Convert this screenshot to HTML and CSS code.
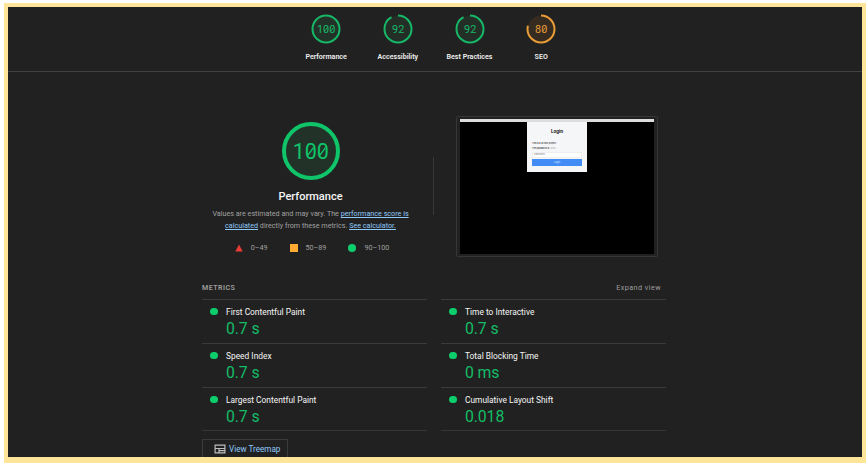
FILE: index.html
```html
<!DOCTYPE html>
<html lang="en">
<head>
<meta charset="utf-8">
<title>Lighthouse report</title>
<link rel="stylesheet" href="styles.css">
</head>
<body>
<main class="report">
  <header class="scores">
    <div class="score">
      <svg class="gauge" viewBox="0 0 30 30"><circle class="ring" cx="15" cy="15" r="13.5"/><text x="6 12.1 18.2" y="18.9">100</text><path class="slash" d="M13.9 17 16.3 13.4M20 17l2.4-3.6"/></svg>
      <span>Performance</span>
    </div>
    <div class="score">
      <svg class="gauge" viewBox="0 0 30 30"><circle class="disc" cx="15" cy="15" r="13.5"/><circle class="ring" cx="15" cy="15" r="13.5" pathLength="100" stroke-dasharray="92 8" transform="rotate(-90 15 15)"/><text x="9 15.2" y="18.9">92</text></svg>
      <span>Accessibility</span>
    </div>
    <div class="score">
      <svg class="gauge" viewBox="0 0 30 30"><circle class="disc" cx="15" cy="15" r="13.5"/><circle class="ring" cx="15" cy="15" r="13.5" pathLength="100" stroke-dasharray="92 8" transform="rotate(-90 15 15)"/><text x="9 15.2" y="18.9">92</text></svg>
      <span>Best Practices</span>
    </div>
    <div class="score average">
      <svg class="gauge" viewBox="0 0 30 30"><circle class="disc" cx="15" cy="15" r="13.5"/><circle class="ring" cx="15" cy="15" r="13.5" pathLength="100" stroke-dasharray="79 21" transform="rotate(-90 15 15)"/><text x="9 15.2" y="18.9">80</text><path class="slash" d="M17 17l2.4-3.6"/></svg>
      <span>SEO</span>
    </div>
  </header>

  <section class="overview">
    <div class="summary">
      <svg class="gauge big" viewBox="0 0 58 58"><circle class="ring" cx="29" cy="29" r="27"/><text x="10.8 22.8 34.8" y="37">100</text><path class="slash" d="M26 33.2 31.4 25.6M38 33.2l5.4-7.6"/></svg>
      <h1>Performance</h1>
      <p>Values are estimated and may vary. The <a>performance score is</a><br><a>calculated</a> directly from these metrics. <a>See calculator.</a></p>
      <div class="legend">
        <span><svg viewBox="0 0 8 8"><path fill="#eb3b36" d="M4 .5 7.7 7.5H.3z"/></svg>0–49</span>
        <span><svg viewBox="0 0 8 8"><path fill="#fa3" d="M0 0h8v8H0z"/></svg>50–89</span>
        <span><svg viewBox="0 0 8 8"><circle fill="#0cce6b" cx="4" cy="4" r="4"/></svg>90–100</span>
      </div>
    </div>
    <div class="divider"></div>
    <div class="preview">
      <div class="page">
        <div class="login">
          <h2>Login</h2>
          <p>This is a school project.</p>
          <p>The password is: <i>1234</i></p>
          <div class="field">Password</div>
          <div class="submit">Login</div>
        </div>
      </div>
    </div>
  </section>

  <section class="metrics">
    <div class="metrics-head"><h3>METRICS</h3><span>Expand view</span></div>
    <div class="metrics-grid">
      <div class="metric"><b>First Contentful Paint</b><strong>0.7 s</strong></div>
      <div class="metric"><b>Time to Interactive</b><strong>0.7 s</strong></div>
      <div class="metric"><b>Speed Index</b><strong>0.7 s</strong></div>
      <div class="metric"><b>Total Blocking Time</b><strong>0 ms</strong></div>
      <div class="metric"><b>Largest Contentful Paint</b><strong>0.7 s</strong></div>
      <div class="metric"><b>Cumulative Layout Shift</b><strong>0.018</strong></div>
    </div>
    <div class="treemap">
      <svg viewBox="0 0 12 10"><path fill="none" stroke="#bdbdbd" stroke-width="1.2" d="M1.1 1.1h9.8v7.8H1.1zM1 4.5h10M5 4.5v4.4M5 6.7h6"/></svg>
      <span>View Treemap</span>
    </div>
  </section>
</main>
</body>
</html>
```
FILE: styles.css
```css
* { box-sizing: border-box; }

body {
  margin: 0;
  height: 464px;
  overflow: hidden;
  padding: 3px 2px 1px 4px;
  background: #fff;
  font-family: Roboto, sans-serif;
  color: #f5f5f5;
}

.report {
  height: 460px;
  border: 4px solid #ffe599;
  border-bottom-width: 6px;
  background: #212121;
  overflow: hidden;
}

h1, h2, h3, p { margin: 0; }

.scores {
  height: 65px;
  padding: 7px 0 0 282.3px;
  display: flex;
  border-bottom: 1px solid #424242;
}

.score {
  width: 71.7px;
  display: flex;
  flex-direction: column;
  align-items: center;
  font-size: 7.1px;
  font-weight: 600;
  line-height: 10px;
  color: #f0f0f0;
  white-space: nowrap;
}
.score span { margin-top: 7.6px; }

.gauge { width: 30px; height: 30px; color: #18b767; }
.average .gauge { color: #e99d37; }
.gauge .ring { fill: none; stroke: currentColor; stroke-width: 2; }
.gauge .ring:first-child { fill: #233228; }
.gauge .disc { fill: #232e27; }
.average .disc { fill: #352b20; }
.gauge text {
  font: 400 10.8px Roboto, sans-serif;
  fill: currentColor;
}
.slash { fill: none; stroke: currentColor; stroke-width: .8; }
.gauge.big { width: 58px; height: 58px; color: #0fc469; }
.gauge.big .ring { stroke-width: 4; }
.gauge.big text { font-size: 21.5px; }
.gauge.big .slash { stroke-width: 1.4; }

.overview {
  height: 205px;
  padding: 44px 0 0 194px;
  display: flex;
}

.summary {
  width: 217px;
  padding-top: 6px;
  display: flex;
  flex-direction: column;
  align-items: center;
}
.summary h1 {
  margin-top: 8px;
  font-size: 11px;
  font-weight: 500;
  line-height: 18px;
}
.summary p {
  margin-top: 2px;
  font-size: 7.2px;
  line-height: 12px;
  color: #a0a0a0;
  text-align: center;
  white-space: nowrap;
}
.summary a { color: #90caf9; text-decoration: underline; }

.legend {
  margin: 11px 0 0 3px;
  display: flex;
  gap: 22px;
  font-size: 7.2px;
  line-height: 10px;
  color: #a0a0a0;
}
.legend span { display: flex; align-items: center; }
.legend svg { width: 8px; height: 8px; margin-right: 8px; }

.divider {
  width: 1px;
  height: 58px;
  margin: 41px 22px 0 14px;
  background: #383838;
}

.preview {
  width: 202px;
  height: 141px;
  border: 1px solid #363636;
  border-radius: 2px;
  padding: 2px 3px;
}
.page {
  height: 135px;
  background: #000;
  border-top: 3px solid #ddd;
}
.login {
  width: 60px;
  height: 50px;
  margin-left: 67px;
  padding: 6px 5px 0;
  background: #f5f6f7;
  color: #333;
  font: 2.8px/5px Inter, sans-serif;
  white-space: nowrap;
}
.login h2 {
  margin-bottom: 6px;
  font-size: 4.5px;
  line-height: 7px;
  font-weight: 700;
  color: #111;
  text-align: center;
}
.login p { font-size: 2.2px; font-weight: 500; }
.login i { color: #999; font-style: normal; }
.field { height: 6px; margin-top: 1px; padding-left: 1px; background: #fff; border: .5px solid #eee; color: #777; font-size: 2.3px; line-height: 4px; }
.submit { height: 7px; margin-top: 1px; font-size: 2.3px; line-height: 7px; background: #428df5; color: #d5e6ff; text-align: center; }

.metrics { width: 464px; margin-left: 194px; }
.metrics-head {
  height: 22px;
  padding: 6px 5px 0 0;
  display: flex;
  justify-content: space-between;
  font-size: 7.2px;
  line-height: 10px;
  letter-spacing: .45px;
  color: #9e9e9e;
}
.metrics-head h3 { font-size: 7.1px; font-weight: 600; }
.metrics-grid {
  display: grid;
  grid-template-columns: 225px 225px;
  grid-auto-rows: 44px;
  column-gap: 14px;
  height: 132px;
}
.metric {
  position: relative;
  padding: 6px 0 0 24px;
  border-top: 1px solid #3b3b3b;
}
.metric:nth-last-child(-n+2) { border-bottom: 1px solid #363636; }
.metric::before {
  content: "";
  position: absolute;
  left: 8px;
  top: 7.5px;
  width: 7.5px;
  height: 7.5px;
  border-radius: 50%;
  background: #0cce6b;
}
.metric b, .metric strong { display: block; font-weight: 400; }
.metric b { font-size: 8.4px; line-height: 12px; }
.metric strong { font-size: 15.8px; line-height: 20px; margin-top: 1px; letter-spacing: -.1px; color: #14bd66; }

.treemap {
  width: 86px;
  height: 26px;
  margin-top: 8px;
  padding: 3px 0 0 11px;
  display: flex;
  align-items: flex-start;
  border: 1px solid #3b3b3b;
  font-size: 8.15px;
  line-height: 12px;
  color: #90caf9;
  white-space: nowrap;
}
.treemap svg { width: 12px; height: 10px; margin: 1px 3px 0 0; }
```
